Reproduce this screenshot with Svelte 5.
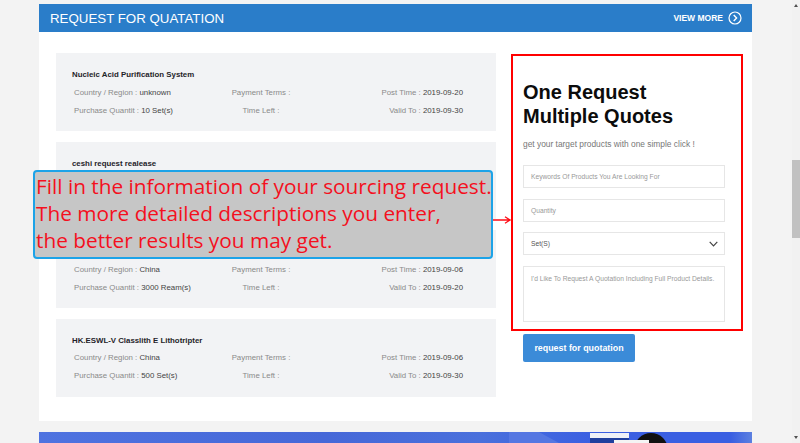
<script lang="ts">
  // rows and titles covered by the callout in the screenshot are left empty
  const requests = [
    { title: 'Nucleic Acid Purification System', country: 'unknown', qty: '10 Set(s)', post: '2019-09-20', valid: '2019-09-30' },
    { title: 'ceshi request realease' },
    { title: '', country: 'China', qty: '3000 Ream(s)', post: '2019-09-06', valid: '2019-09-20' },
    { title: 'HK.ESWL-V Classlith E Lithotripter', country: 'China', qty: '500 Set(s)', post: '2019-09-06', valid: '2019-09-30' }
  ];
</script>

<div class="page">
  <div class="container">
    <header class="head">
      <h2>REQUEST FOR QUATATION</h2>
      <a class="more" href="#more">
        VIEW MORE
        <svg width="14" height="14" viewBox="0 0 14 14" fill="none" stroke="#fff">
          <circle cx="7" cy="7" r="6" stroke-width="1.2" />
          <path d="M5.7 3.9 8.6 7 5.7 10.1" stroke-width="1.4" />
        </svg>
      </a>
    </header>

    <section class="panel">
      <div class="list">
        {#each requests as r}
          <div class="card">
            <strong>{r.title}</strong>
            {#if r.country}
              <div class="row">
                <div><span class="lab">Country / Region :</span> <span class="val">{r.country}</span></div>
                <div class="c2"><span class="lab">Payment Terms :</span></div>
                <div class="c3"><span class="lab">Post Time :</span> <span class="val">{r.post}</span></div>
              </div>
              <div class="row">
                <div><span class="lab">Purchase Quantit :</span> <span class="val">{r.qty}</span></div>
                <div class="c2"><span class="lab">Time Left :</span></div>
                <div class="c3"><span class="lab">Valid To :</span> <span class="val">{r.valid}</span></div>
              </div>
            {/if}
          </div>
        {/each}
      </div>

      <aside class="side">
        <form class="quote">
          <h3>One Request<br />Multiple Quotes</h3>
          <p>get your target products with one simple click !</p>
          <div class="field ph">Keywords Of Products You Are Looking For</div>
          <div class="field ph">Quantity</div>
          <div class="field sel">
            <span>Set(S)</span>
            <svg width="9" height="6" viewBox="0 0 9 6" fill="none" stroke="#444" stroke-width="1.2">
              <path d="M.7.8 4.5 4.8 8.3.8" />
            </svg>
          </div>
          <div class="field area ph">I'd Like To Request A Quotation Including Full Product Details.</div>
        </form>
        <button type="button">request for quotation</button>
      </aside>
    </section>

    <div class="banner">
      <div class="wedge"></div>
      <div class="shot"></div>
      <div class="dot"></div>
      <div class="sheet"></div>
    </div>
  </div>

  <div class="callout">
    Fill in the information of your sourcing request.<br />
    The more detailed descriptions you enter,<br />
    the better results you may get.
  </div>
  <svg class="arrow" width="18" height="8" viewBox="0 0 18 8" fill="none" stroke="#ff0a14" stroke-width="1.3">
    <path d="M0 4H17M12 .8 17 4 12 7.2" />
  </svg>

  <div class="scrollbar">
    <span class="up"></span>
    <span class="thumb"></span>
    <span class="down"></span>
  </div>
</div>

<style>
  :global(body) {
    margin: 0;
    background: #f3f3f3;
    overflow: hidden;
  }
  .page {
    position: relative;
    height: 443px;
    overflow: hidden;
    padding-top: 4px;
    box-sizing: border-box;
    font-family: "Liberation Sans", Arial, sans-serif;
  }
  .container { width: 713px; margin-left: 39px; }

  .head {
    height: 28px;
    background: #2a7dc9;
    display: flex;
    align-items: center;
    justify-content: space-between;
    padding: 0 10px 0 11px;
    color: #fff;
  }
  .head h2 { margin: 0; font-size: 13.3px; font-weight: 400; }
  .more {
    display: flex;
    align-items: center;
    gap: 5px;
    color: #fff;
    font-size: 8.5px;
    font-weight: 700;
    text-decoration: none;
  }

  .panel {
    height: 389px;
    background: #fff;
    display: flex;
    box-sizing: border-box;
    padding: 21px 9px 0 17px;
    justify-content: space-between;
  }
  .list { width: 440px; display: flex; flex-direction: column; gap: 11px; }
  .card {
    height: 77.67px;
    background: #f2f3f5;
    box-sizing: border-box;
    padding: 17px 16px 0;
  }
  .card strong { display: block; height: 10px; font-size: 7.85px; line-height: 10px; color: #1f2329; margin-bottom: 3px; }
  .row {
    display: grid;
    grid-template-columns: 128px 118px 1fr;
    height: 18px;
    align-items: center;
    font-size: 7.85px;
    white-space: nowrap;
    padding-left: 2px;
  }
  .lab { color: #8a8a8a; }
  .val { color: #444; }
  .c2 { text-align: center; }
  .c3 { text-align: right; padding-right: 17px; }

  .side { width: 232px; }
  .quote {
    height: 277px;
    border: 2px solid #ff0000;
    box-sizing: border-box;
    margin-top: 1px;
    padding: 24px 16px 0 10px;
  }
  .quote h3 { margin: 0; font-size: 20px; line-height: 24px; color: #0c0c0c; }
  .quote p { margin: 10px 0 15px; font-size: 8.4px; line-height: 12px; color: #777; }
  .field {
    height: 23px;
    border: 1px solid #e6e6e6;
    box-sizing: border-box;
    margin-bottom: 10.5px;
    padding: 0 7px;
    display: flex;
    align-items: center;
    font-size: 6.7px;
    white-space: nowrap;
  }
  .ph { color: #999; }
  .sel { justify-content: space-between; color: #555; padding-right: 6px; }
  .area { height: 56px; align-items: flex-start; padding-top: 8px; margin-bottom: 0; }
  .side button {
    display: block;
    width: 112px;
    height: 28px;
    margin: 3px 0 0 12px;
    background: #3b8bd8;
    color: #fff;
    border: 0;
    border-radius: 2px;
    font: 700 8.9px "Liberation Sans", Arial, sans-serif;
  }

  .banner {
    position: relative;
    height: 11px;
    margin-top: 11px;
    overflow: hidden;
    background: linear-gradient(90deg, #4f73e0, #4668d8 40%, #4a70dc 62%, #3a5fe2 78%, #3a5fe2 97%, #5c80e0);
  }
  .wedge {
    position: absolute;
    left: 470px;
    top: 0;
    width: 50px;
    height: 11px;
    background: #5577e2;
    clip-path: polygon(0 0, 60% 0, 100% 100%, 0 100%);
  }
  .shot {
    position: absolute;
    left: 551px;
    top: 1px;
    width: 39px;
    height: 10px;
    background: linear-gradient(#eef1f8 5px, #1f3f9e 5px);
  }
  .sheet {
    position: absolute;
    left: 575px;
    top: 8px;
    width: 35px;
    height: 3px;
    background: #f4f4f4;
  }
  .dot {
    position: absolute;
    left: 595px;
    top: 1px;
    width: 34px;
    height: 34px;
    border-radius: 50%;
    background: #111;
  }

  .callout {
    position: absolute;
    left: 33px;
    top: 170px;
    width: 460px;
    height: 89px;
    box-sizing: border-box;
    border: 2px solid #1ca3e8;
    border-radius: 4px;
    background: #c6c6c6;
    color: #f4101e;
    padding: 1px 0 0 1px;
    font-family: "Open Sans", sans-serif;
    font-size: 20.8px;
    line-height: 27px;
    white-space: nowrap;
  }
  .arrow { position: absolute; left: 493px; top: 216px; }

  .scrollbar {
    position: absolute;
    right: 0;
    top: 0;
    bottom: 0;
    width: 8px;
    background: #f1f1f1;
  }
  .thumb { position: absolute; left: 0; top: 160px; width: 8px; height: 78px; background: #c1c1c1; }
  .up, .down { position: absolute; left: 2px; width: 0; height: 0; border: 2px solid transparent; }
  .up { top: 2px; border-bottom: 3px solid #505050; }
  .down { bottom: 2px; border-top: 3px solid #505050; }
</style>
